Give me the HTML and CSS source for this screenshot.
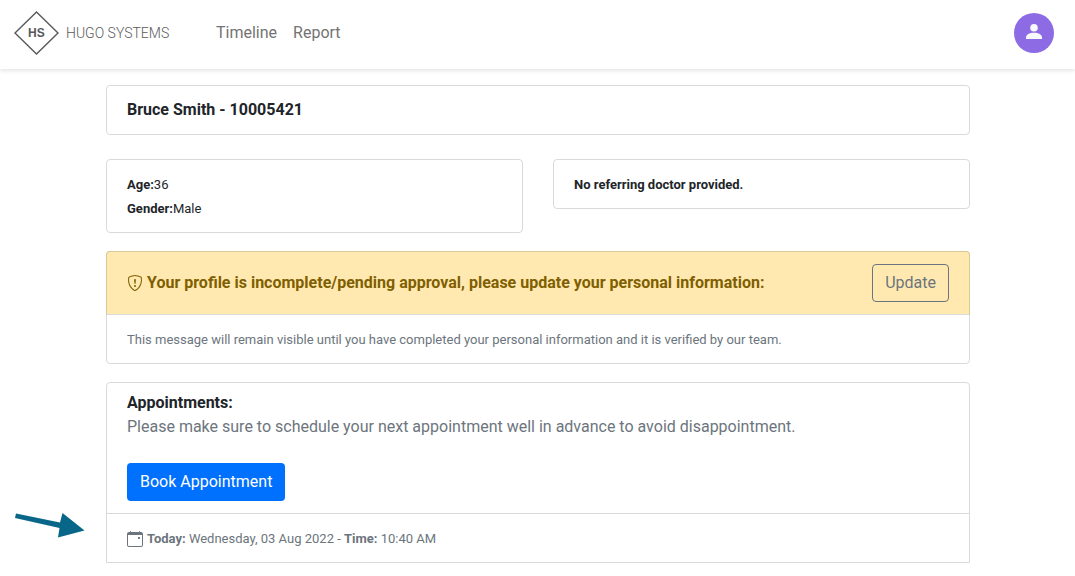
FILE: index.html
```html
<!DOCTYPE html>
<html lang="en">
<head>
<meta charset="utf-8">
<title>Hugo Systems - Patient</title>
<link rel="stylesheet" href="styles.css">
</head>
<body>
<header class="navbar">
  <a class="brand" href="#" aria-label="Hugo Systems">
    <svg class="brand-logo" width="156" height="46" viewBox="0 0 156 46" aria-hidden="true">
      <path d="M22.5 2 L44 23 L22.5 44 L1 23 Z" fill="none" stroke="#58595b" stroke-width="1.4"/>
      <text class="brand-initials" x="14" y="27">HS</text>
      <text class="brand-name" x="52" y="28">HUGO SYSTEMS</text>
    </svg>
  </a>
  <nav class="nav-links">
    <a href="#">Timeline</a>
    <a href="#">Report</a>
  </nav>
  <button class="avatar" type="button" aria-label="Account">
    <svg width="16" height="16" viewBox="0 0 16 16" aria-hidden="true">
      <circle cx="8" cy="4.8" r="3.8" fill="#f8f9fa"/>
      <path d="M0 16V14.500C0 11.500 3.500 9.700 8 9.700S16 11.500 16 14.500V16Z" fill="#f8f9fa"/>
    </svg>
  </button>
</header>
<main class="content">
  <section class="card patient">
    <h1 class="card-section title">Bruce Smith - 10005421</h1>
  </section>
  <div class="columns">
    <section class="card card-section">
      <div><small><strong>Age:</strong>36</small></div>
      <div><small><strong>Gender:</strong>Male</small></div>
    </section>
    <section class="card card-section">
      <small><strong>No referring doctor provided.</strong></small>
    </section>
  </div>
  <section class="card notice">
    <div class="card-section notice-header">
      <h2 class="title notice-title">
        <svg width="16" height="16" viewBox="0 0 16 16" fill="currentColor" aria-hidden="true">
          <path d="M5.338 1.59a61.44 61.44 0 0 0-2.837.856.481.481 0 0 0-.328.39c-.554 4.157.726 7.19 2.253 9.188a10.725 10.725 0 0 0 2.287 2.233c.346.244.652.42.893.533.12.057.218.095.293.118a.55.55 0 0 0 .101.025.615.615 0 0 0 .1-.025c.076-.023.174-.061.294-.118.24-.113.547-.29.893-.533a10.726 10.726 0 0 0 2.287-2.233c1.527-1.997 2.807-5.031 2.253-9.188a.48.48 0 0 0-.328-.39c-.651-.213-1.75-.56-2.837-.855C9.552 1.29 8.531 1.067 8 1.067c-.53 0-1.552.223-2.662.524zM5.072.56C6.157.265 7.31 0 8 0s1.843.265 2.928.56c1.11.3 2.229.655 2.887.87a1.54 1.54 0 0 1 1.044 1.262c.596 4.477-.787 7.795-2.465 9.99a11.775 11.775 0 0 1-2.517 2.453 7.159 7.159 0 0 1-1.048.625c-.28.132-.581.24-.829.24s-.548-.108-.829-.24a7.158 7.158 0 0 1-1.048-.625 11.777 11.777 0 0 1-2.517-2.453C1.928 10.487.545 7.169 1.141 2.692A1.54 1.54 0 0 1 2.185 1.43 62.456 62.456 0 0 1 5.072.56z"/>
          <path d="M7.001 11a1 1 0 1 1 2 0 1 1 0 0 1-2 0zM7.1 4.995a.905.905 0 1 1 1.8 0l-.35 3.507a.553.553 0 0 1-1.1 0L7.1 4.995z"/>
        </svg>
        Your profile is incomplete/pending approval, please update your personal information:
      </h2>
      <button class="btn btn-outline" type="button">Update</button>
    </div>
    <p class="card-section muted"><small>This message will remain visible until you have completed your personal information and it is verified by our team.</small></p>
  </section>
  <section class="card appointments">
    <div class="appointments-header">
      <h2 class="title">Appointments:</h2>
      <p class="muted">Please make sure to schedule your next appointment well in advance to avoid disappointment.</p>
      <button class="btn btn-primary" type="button">Book Appointment</button>
    </div>
    <div class="card-section muted">
      <svg class="inline-icon" width="16" height="16" viewBox="0 0 16 16" fill="currentColor" aria-hidden="true">
        <path d="M11 6.500a.5.5 0 0 1 .5-.5h1a.5.5 0 0 1 .5.5v1a.5.5 0 0 1-.5.5h-1a.5.5 0 0 1-.5-.5v-1z"/>
        <path d="M3.500 0a.5.5 0 0 1 .5.5V1h8V.5a.5.5 0 0 1 1 0V1h1a2 2 0 0 1 2 2v11a2 2 0 0 1-2 2H2a2 2 0 0 1-2-2V3a2 2 0 0 1 2-2h1V.5a.5.5 0 0 1 .5-.5zM1 4v10a1 1 0 0 0 1 1h12a1 1 0 0 0 1-1V4H1z"/>
      </svg>
      <small><strong>Today:</strong> Wednesday, 03 Aug 2022 - <strong>Time:</strong> 10:40 AM</small>
    </div>
    <svg class="pointer" width="72" height="28" viewBox="0 0 72 28" aria-hidden="true">
      <path d="M2 1.500 L46 10.500 L48.500 1 L70.500 18.500 L44 25.500 L45.500 16 L1 6 Z" fill="#086788"/>
    </svg>
  </section>
</main>
</body>
</html>
```
FILE: styles.css
```css
* { box-sizing: border-box; }

body {
  margin: 0;
  background: #fff;
  color: #212529;
  font: 16px/24px Roboto, "Liberation Sans", sans-serif;
}

h1, h2, p { margin: 0; }
svg { display: block; flex: none; }
strong { font-weight: 700; }
small { font-size: 13px; line-height: 16px; }

.navbar {
  display: flex;
  align-items: center;
  padding: 10px 21px 13px 14px;
  box-shadow: 0 2px 4px rgba(0, 0, 0, 0.1);
}

.brand-initials {
  font: 700 12px "Liberation Sans", sans-serif;
  fill: #58595b;
}

.brand-name {
  font: 300 14px Roboto, sans-serif;
  fill: #58595b;
}

.nav-links {
  display: flex;
  gap: 16px;
  margin-left: 46px;
}

.nav-links a {
  color: #737373;
  text-decoration: none;
}

.avatar {
  display: grid;
  place-items: center;
  width: 40px;
  height: 40px;
  margin-left: auto;
  padding: 0 0 4px;
  border: 0;
  border-radius: 50%;
  background: #8d6be4;
}

.content { padding: 16px 105px 13px 106px; }

.card {
  border: 1px solid #d9dadb;
  border-radius: 4px;
}

.card-section { padding: 12px 20px; }

.title {
  font-size: 16px;
  line-height: 24px;
  font-weight: 700;
}

.muted { color: #6c757d; }

.columns {
  display: grid;
  grid-template-columns: 1fr 1fr;
  align-items: start;
  gap: 30px;
  margin: 24px 0 18px;
}

.notice-header {
  display: flex;
  align-items: center;
  justify-content: space-between;
  margin: -1px -1px 0;
  border: 1px solid #d8c995;
  border-bottom-color: #d9dadb;
  border-radius: 4px 4px 0 0;
  background: #ffe9b0;
  color: #7f5f01;
}

.notice-title {
  display: flex;
  align-items: center;
  gap: 4px;
}

.btn {
  padding: 6px 12px;
  border: 1px solid transparent;
  border-radius: 4px;
  font: inherit;
}

.btn-outline {
  border-color: #6c757d;
  background: transparent;
  color: #6c757d;
}

.btn-primary {
  display: block;
  margin-top: 24px;
  background: #0070ff;
  color: #fff;
}

.appointments {
  position: relative;
  margin-top: 18px;
  border-radius: 4px 4px 0 0;
}

.appointments-header {
  padding: 8px 20px 12px;
  border-bottom: 1px solid #d9dadb;
}

.inline-icon {
  display: inline-block;
  vertical-align: middle;
}

.pointer {
  position: absolute;
  left: -93px;
  bottom: 22px;
}
```
